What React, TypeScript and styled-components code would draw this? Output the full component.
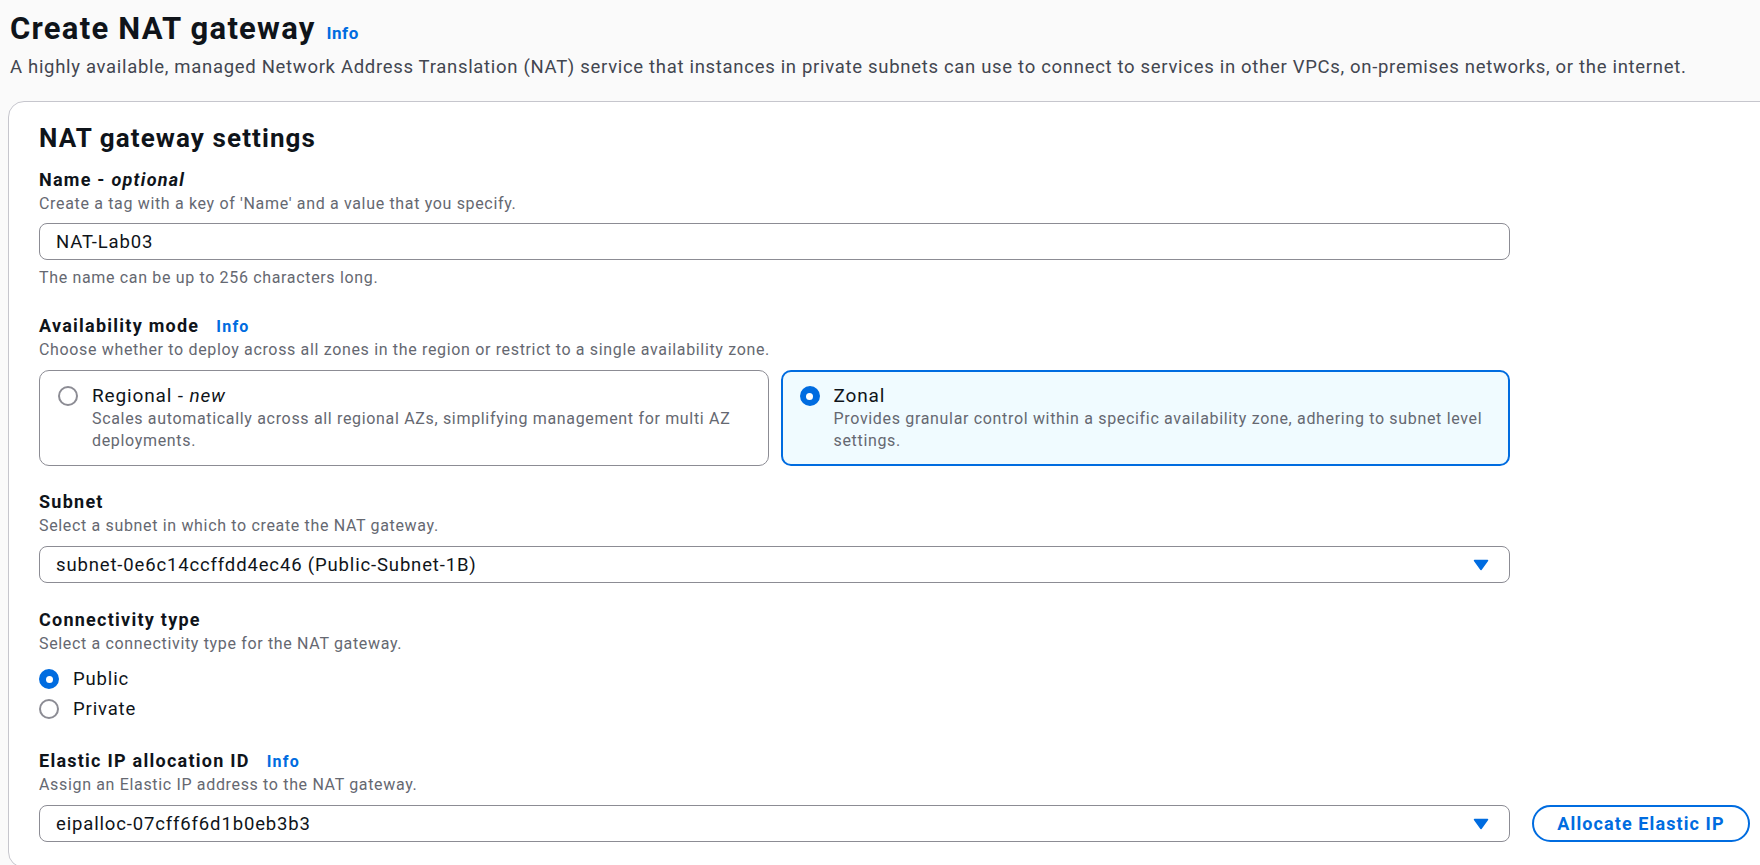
import React from "react";
import styled, { createGlobalStyle } from "styled-components";

const GlobalStyle = createGlobalStyle`
  html, body {
    margin: 0;
    padding: 0;
    background: #fafafa;
    overflow: hidden;
  }
  body {
    font-family: Roboto, "Liberation Sans", Arial, sans-serif;
    color: #0f141a;
  }
  * { box-sizing: border-box; }
`;

const CONTROL_WIDTH = 1471;

const Page = styled.div`
  width: 1820px;
  padding: 11px 0 0 8px;
`;

const Header = styled.header`
  padding-left: 2px;
`;

const TitleRow = styled.div`
  display: flex;
  align-items: baseline;
  gap: 11px;
`;

const Title = styled.h1`
  margin: 0;
  font-size: 31px;
  line-height: 36px;
  font-weight: 700;
  letter-spacing: 1.25px;
  color: #0f141a;
`;

const InfoLink = styled.a<{ $size?: number; $spacing?: number }>`
  font-size: ${(p) => p.$size ?? 16}px;
  letter-spacing: ${(p) => p.$spacing ?? 1.2}px;
  font-weight: 700;
  color: #006ce0;
  text-decoration: none;
  cursor: pointer;
`;

const HeaderDescription = styled.p`
  margin: 7px 0 0;
  font-size: 18.5px;
  line-height: 26px;
  letter-spacing: 0.69px;
  color: #424650;
`;

const Card = styled.section`
  margin-top: 21px;
  background: #ffffff;
  border: 1px solid #c6c6cd;
  border-radius: 16px;
  padding: 21px 30px 25px 30px;
`;

const SectionHeading = styled.h2`
  margin: 0;
  font-size: 26px;
  line-height: 30px;
  font-weight: 700;
  letter-spacing: 1.1px;
  color: #0f141a;
`;

const Form = styled.div`
  display: flex;
  flex-direction: column;
  gap: 24px;
  margin-top: 15px;
`;

const Field = styled.div<{ $extraTop?: number }>`
  display: flex;
  flex-direction: column;
  align-items: flex-start;
  margin-top: ${(p) => p.$extraTop ?? 0}px;
`;

const LabelRow = styled.div`
  display: flex;
  align-items: baseline;
  gap: 17px;
`;

const Label = styled.label`
  font-size: 18px;
  line-height: 24px;
  font-weight: 700;
  letter-spacing: 1.25px;
  color: #0f141a;

  em {
    font-style: italic;
  }
`;

const Description = styled.div`
  font-size: 16px;
  line-height: 24px;
  letter-spacing: 0.66px;
  color: #656871;
`;

const Constraint = styled(Description)`
  margin-top: 6px;
`;

const TextInput = styled.input`
  margin-top: 7px;
  height: 37px;
  width: ${CONTROL_WIDTH}px;
  border: 1px solid #8c8c94;
  border-radius: 8px;
  padding: 0 16px;
  font-family: inherit;
  font-size: 18.5px;
  letter-spacing: 0.85px;
  color: #0f141a;
  background: #ffffff;
  outline: none;
`;

const SelectBox = styled.div`
  flex: none;
  margin-top: 8px;
  height: 37px;
  width: ${CONTROL_WIDTH}px;
  border: 1px solid #8c8c94;
  border-radius: 8px;
  padding: 0 20px 0 16px;
  display: flex;
  align-items: center;
  justify-content: space-between;
  font-size: 18.5px;
  letter-spacing: 0.85px;
  color: #0f141a;
  background: #ffffff;
  cursor: pointer;
`;

const SelectRow = styled.div`
  display: flex;
  align-items: flex-start;
  gap: 22px;
`;

const OutlineButton = styled.button`
  flex: none;
  margin-top: 8px;
  height: 37px;
  width: 218px;
  border: 2px solid #006ce0;
  border-radius: 20px;
  background: #ffffff;
  color: #006ce0;
  font-family: inherit;
  font-size: 18px;
  letter-spacing: 1.1px;
  font-weight: 700;
  cursor: pointer;
`;

const Tiles = styled.div`
  display: grid;
  grid-template-columns: 1fr 1fr;
  gap: 12px;
  width: ${CONTROL_WIDTH}px;
  margin-top: 8px;
`;

const Tile = styled.div<{ $selected?: boolean }>`
  display: flex;
  align-items: flex-start;
  gap: 14px;
  height: 96px;
  border-radius: 10px;
  border: ${(p) => (p.$selected ? "2px solid #006ce0" : "1px solid #8c8c94")};
  background: ${(p) => (p.$selected ? "#f0fbff" : "#ffffff")};
  padding: ${(p) => (p.$selected ? "12px 17px 0 17px" : "13px 18px 0 18px")};
`;

const TileText = styled.div`
  display: flex;
  flex-direction: column;
  min-width: 0;
`;

const TileLabel = styled.div`
  font-size: 19px;
  line-height: 24px;
  letter-spacing: 0.85px;
  color: #0f141a;

  em {
    font-style: italic;
  }
`;

const TileDescription = styled.div`
  font-size: 16px;
  line-height: 22px;
  letter-spacing: 0.67px;
  color: #656871;
`;

const Radio = styled.span<{ $checked?: boolean }>`
  flex: none;
  position: relative;
  width: 20px;
  height: 20px;
  margin-top: 2px;
  border-radius: 50%;
  background: ${(p) => (p.$checked ? "#006ce0" : "#ffffff")};
  border: 2px solid ${(p) => (p.$checked ? "#006ce0" : "#8c8c94")};

  &::after {
    content: "";
    display: ${(p) => (p.$checked ? "block" : "none")};
    position: absolute;
    left: 50%;
    top: 50%;
    width: 7px;
    height: 7px;
    margin: -3.5px 0 0 -3.5px;
    border-radius: 50%;
    background: #ffffff;
  }
`;

const RadioGroup = styled.div`
  display: flex;
  flex-direction: column;
  margin-top: 8px;
`;

const RadioOption = styled.div`
  display: flex;
  align-items: center;
  gap: 14px;
  height: 30px;

  ${Radio} {
    margin-top: 0;
  }
`;

const RadioLabel = styled.span`
  font-size: 18.5px;
  letter-spacing: 0.85px;
  color: #0f141a;
`;

const Caret = () => (
  <svg width="16" height="12" viewBox="0 0 16 12" aria-hidden="true">
    <path
      d="M1.5 1.5h13L8 10.5z"
      fill="#006ce0"
      stroke="#006ce0"
      strokeWidth="1.5"
      strokeLinejoin="round"
    />
  </svg>
);

export default function App() {
  return (
    <>
      <GlobalStyle />
      <Page>
        <Header>
          <TitleRow>
            <Title>Create NAT gateway</Title>
            <InfoLink $size={17} $spacing={0.5}>
              Info
            </InfoLink>
          </TitleRow>
          <HeaderDescription>
            A highly available, managed Network Address Translation (NAT) service that instances in
            private subnets can use to connect to services in other VPCs, on-premises networks, or
            the internet.
          </HeaderDescription>
        </Header>

        <Card>
          <SectionHeading>NAT gateway settings</SectionHeading>
          <Form>
            <Field>
              <Label>
                Name - <em>optional</em>
              </Label>
              <Description>Create a tag with a key of 'Name' and a value that you specify.</Description>
              <TextInput readOnly value="NAT-Lab03" />
              <Constraint>The name can be up to 256 characters long.</Constraint>
            </Field>

            <Field>
              <LabelRow>
                <Label>Availability mode</Label>
                <InfoLink>Info</InfoLink>
              </LabelRow>
              <Description>
                Choose whether to deploy across all zones in the region or restrict to a single
                availability zone.
              </Description>
              <Tiles>
                <Tile>
                  <Radio />
                  <TileText>
                    <TileLabel>
                      Regional - <em>new</em>
                    </TileLabel>
                    <TileDescription>
                      Scales automatically across all regional AZs, simplifying management for multi
                      AZ deployments.
                    </TileDescription>
                  </TileText>
                </Tile>
                <Tile $selected>
                  <Radio $checked />
                  <TileText>
                    <TileLabel>Zonal</TileLabel>
                    <TileDescription>
                      Provides granular control within a specific availability zone, adhering to
                      subnet level settings.
                    </TileDescription>
                  </TileText>
                </Tile>
              </Tiles>
            </Field>

            <Field>
              <Label>Subnet</Label>
              <Description>Select a subnet in which to create the NAT gateway.</Description>
              <SelectBox>
                <span>subnet-0e6c14ccffdd4ec46 (Public-Subnet-1B)</span>
                <Caret />
              </SelectBox>
            </Field>

            <Field $extraTop={1}>
              <Label>Connectivity type</Label>
              <Description>Select a connectivity type for the NAT gateway.</Description>
              <RadioGroup>
                <RadioOption>
                  <Radio $checked />
                  <RadioLabel>Public</RadioLabel>
                </RadioOption>
                <RadioOption>
                  <Radio />
                  <RadioLabel>Private</RadioLabel>
                </RadioOption>
              </RadioGroup>
            </Field>

            <Field $extraTop={1}>
              <LabelRow>
                <Label>Elastic IP allocation ID</Label>
                <InfoLink>Info</InfoLink>
              </LabelRow>
              <Description>Assign an Elastic IP address to the NAT gateway.</Description>
              <SelectRow>
                <SelectBox>
                  <span>eipalloc-07cff6f6d1b0eb3b3</span>
                  <Caret />
                </SelectBox>
                <OutlineButton>Allocate Elastic IP</OutlineButton>
              </SelectRow>
            </Field>
          </Form>
        </Card>
      </Page>
    </>
  );
}
